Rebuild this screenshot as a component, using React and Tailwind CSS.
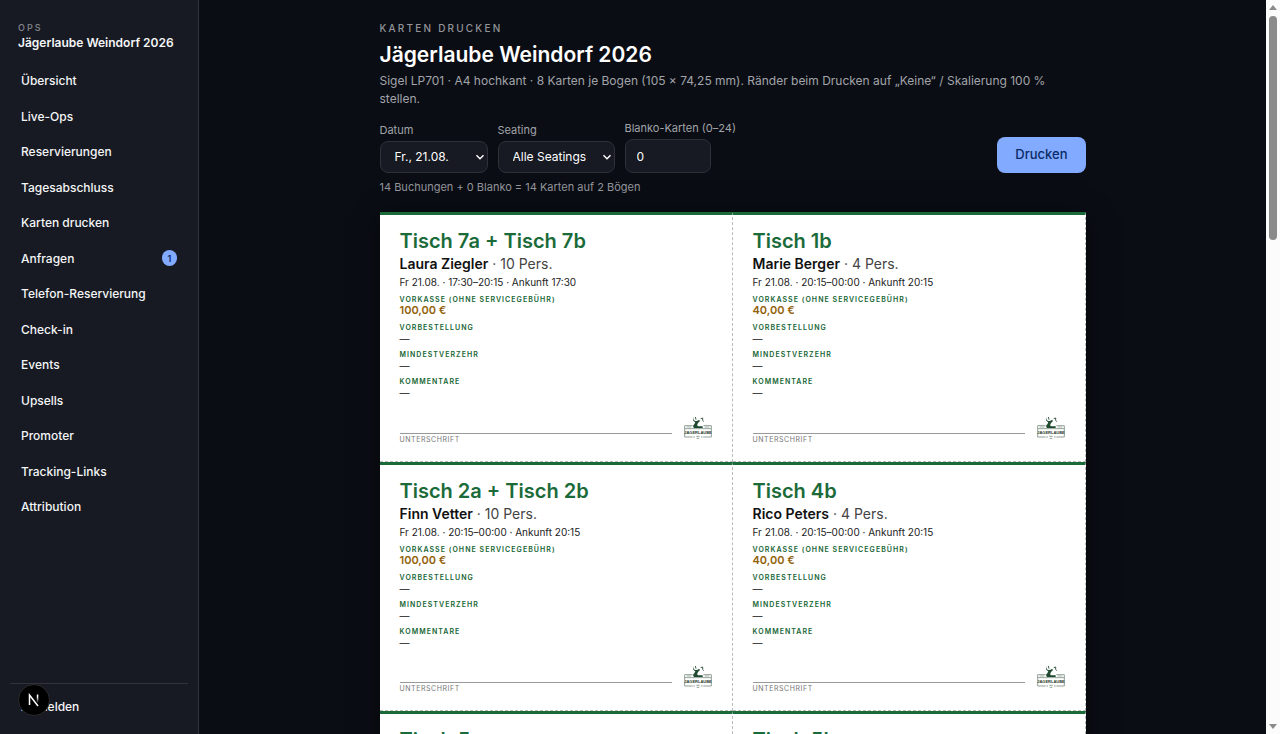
import React, { useState } from 'react';

const NAV_ITEMS = [
  { label: 'Übersicht' },
  { label: 'Live-Ops' },
  { label: 'Reservierungen' },
  { label: 'Tagesabschluss' },
  { label: 'Karten drucken' },
  { label: 'Anfragen', badge: 1 },
  { label: 'Telefon-Reservierung' },
  { label: 'Check-in' },
  { label: 'Events' },
  { label: 'Upsells' },
  { label: 'Promoter' },
  { label: 'Tracking-Links' },
  { label: 'Attribution' },
];

const BOOKINGS = [
  { table: 'Tisch 7a + Tisch 7b', name: 'Laura Ziegler', guests: 10, slot: '17:30–20:15', arrival: '17:30', prepaid: '100,00 €' },
  { table: 'Tisch 1b', name: 'Marie Berger', guests: 4, slot: '20:15–00:00', arrival: '20:15', prepaid: '40,00 €' },
  { table: 'Tisch 2a + Tisch 2b', name: 'Finn Vetter', guests: 10, slot: '20:15–00:00', arrival: '20:15', prepaid: '100,00 €' },
  { table: 'Tisch 4b', name: 'Rico Peters', guests: 4, slot: '20:15–00:00', arrival: '20:15', prepaid: '40,00 €' },
  { table: 'Tisch 5a', name: 'Jonas Keller', guests: 4, slot: '20:15–00:00', arrival: '20:15', prepaid: '40,00 €' },
  { table: 'Tisch 5b', name: 'Lena Vogt', guests: 4, slot: '20:15–00:00', arrival: '20:15', prepaid: '40,00 €' },
];

const Logo = () => (
  <svg viewBox="0 0 84 72" className="mb-[6px] w-7 h-6 shrink-0" fill="none" aria-hidden="true">
    <g stroke="#7d8f84" strokeWidth="2.5">
      <path d="M26 29H2v34h24M58 29h24v34H58" />
      <path d="M2 38h80" />
      <path d="M8 33h14M62 33h14" strokeWidth="2" />
    </g>
    <path d="M28 3c-1 7 1 10 6 12 5 0 8-1 11-4l3 4-6 6c-3 5-3 8 0 10h14v5H30c-4-4-3-8 1-11l3-6c-6-2-9-8-6-16Z" fill="#1f4a30" />
    <path d="M34 3l2 8M50 8l6-2v7l3 4" stroke="#3f5c4a" strokeWidth="3" />
    <text x="42" y="55" textAnchor="middle" fontFamily="Liberation Sans Narrow, Liberation Sans, sans-serif" fontWeight="700" fontSize="12" fill="#1f3b2a">
      JÄGERLAUBE
    </text>
    <path d="M28 63h5M51 63h5M37 61h10M38 67h8" stroke="#7d8f84" strokeWidth="2.5" />
  </svg>
);

const CardField = ({ label, value, className }) => (
  <div className="mb-[5px]">
    <div className="text-[7px] leading-[10px] font-semibold uppercase tracking-[0.15em] text-[#166534]">{label}</div>
    <div className={className || 'text-[10px] leading-3 text-[#111]'}>{value}</div>
  </div>
);

const BookingCard = ({ booking }) => (
  <article className="flex flex-col aspect-[140/99] overflow-hidden border-t-[3px] border-t-[#1b6b3a] border-r border-b border-dashed border-[#bbb] [border-top-style:solid] bg-white px-5 pt-[13px] pb-[15px] text-[#111]">
    <h2 className="mb-px text-[20px] leading-[26px] font-semibold text-[#1b6b3a]">{booking.table}</h2>
    <p className="text-[14px] leading-[18px] text-[#444]">
      <strong className="font-semibold text-[#111]">{booking.name}</strong> · {booking.guests} Pers.
    </p>
    <p className="mb-1 text-[10px] leading-[18px] text-[#222]">
      Fr 21.08. · {booking.slot} · Ankunft {booking.arrival}
    </p>
    <CardField
      label="Vorkasse (ohne Servicegebühr)"
      value={booking.prepaid}
      className="pb-[3px] text-[11px] leading-[10px] font-semibold text-[#92610a]"
    />
    <CardField label="Vorbestellung" value="—" />
    <CardField label="Mindestverzehr" value="—" />
    <CardField label="Kommentare" value="—" />
    <div className="mt-auto flex items-end gap-3">
      <div className="flex-1 border-t border-[#999] text-[7px] leading-3 uppercase tracking-[0.08em] text-[#777]">
        Unterschrift
      </div>
      <Logo />
    </div>
  </article>
);

const Chevron = () => (
  <svg viewBox="0 0 10 10" className="pointer-events-none absolute right-[3px] top-[11px] w-[10px] h-[10px]" fill="none" aria-hidden="true">
    <path d="M1.5 3.2L5 6.8l3.5-3.6" stroke="#fff" strokeWidth="1.4" />
  </svg>
);

const Sidebar = () => (
  <aside className="flex w-[199px] shrink-0 flex-col border-r border-[#30333a] bg-[#171a22] px-[10px] pt-[22px] pb-[10px]">
    <div className="px-2 pb-3">
      <div className="text-[9px] leading-3 font-medium tracking-[0.22em] text-[#85888f]">OPS</div>
      <div className="whitespace-nowrap text-[12px] leading-[17px] font-semibold">Jägerlaube Weindorf 2026</div>
    </div>
    <nav className="flex flex-col">
      {NAV_ITEMS.map((item) => (
        <a
          key={item.label}
          href="#"
          className="flex items-center justify-between rounded-lg px-[11px] py-2 text-[12px] leading-relaxed font-medium hover:bg-white/5"
        >
          {item.label}
          {item.badge && (
            <span className="flex h-4 min-w-[15px] items-center justify-center rounded-full bg-[#82aaff] text-[9px] leading-none font-semibold text-[#0a2a66]">
              {item.badge}
            </span>
          )}
        </a>
      ))}
    </nav>
    <div className="mt-auto border-t border-[#30333a] pt-[5px]">
      <button type="button" className="w-full rounded-lg px-[11px] py-2 text-left text-[12px] leading-relaxed font-medium">
        Abmelden
      </button>
    </div>
  </aside>
);

const DevBadge = () => (
  <div className="fixed bottom-[18px] left-[18px] z-10 flex h-8 w-8 items-center justify-center rounded-full border border-[#2b2b2b] bg-black">
    <svg viewBox="0 0 14 14" className="w-[14px] h-[14px]" fill="none" aria-hidden="true">
      <defs>
        <linearGradient id="fade" x1="0" y1="0" x2="0" y2="1">
          <stop offset="0.3" stopColor="#fff" />
          <stop offset="1" stopColor="#fff" stopOpacity="0" />
        </linearGradient>
      </defs>
      <path d="M2.5 12V2l8.5 11" stroke="#fff" strokeWidth="1.5" />
      <rect x="9.8" y="1.5" width="1.5" height="8.5" fill="url(#fade)" />
    </svg>
  </div>
);

const ScrollTrack = () => (
  <div className="flex w-[14px] shrink-0 flex-col items-center bg-[#fcfcfc] pt-[5px] pb-[5px]" aria-hidden="true">
    <svg viewBox="0 0 8 5" className="w-2 h-[5px]"><path d="M4 0l4 5H0Z" fill="#8b8b8b" /></svg>
    <div className="mt-[6px] h-[31%] w-2 rounded-full bg-[#8b8b8b]" />
    <svg viewBox="0 0 8 5" className="mt-auto w-2 h-[5px]"><path d="M4 5L0 0h8Z" fill="#8b8b8b" /></svg>
  </div>
);

export default function App() {
  const [date, setDate] = useState('2026-08-21');
  const [seating, setSeating] = useState('all');
  const [blanks, setBlanks] = useState(0);
  const total = 14 + Number(blanks);

  return (
    <div className="flex h-screen overflow-hidden bg-[#0a0d14] font-['Inter',sans-serif] text-[#f4f5f7]">
      <Sidebar />

      <main className="flex-1 overflow-y-auto [scrollbar-width:none]">
        <div className="mx-auto max-w-[706px] pt-[21px]">
          <header>
            <div className="text-[10px] leading-[14px] font-medium uppercase tracking-[0.22em] text-[#92949a]">Karten drucken</div>
            <h1 className="mt-[5px] text-[21px] leading-[29px] font-semibold text-white">Jägerlaube Weindorf 2026</h1>
            <p className="mt-[3px] pr-2 text-[12px] leading-[18px] text-[#a2a4a9]">
              Sigel LP701 · A4 hochkant · 8 Karten je Bogen (105 × 74,25 mm). Ränder beim Drucken auf „Keine“ / Skalierung 100 % stellen.
            </p>
          </header>

          {/* Filters */}
          <div className="mt-3 flex flex-wrap items-end gap-[10px]">
            <label className="flex flex-col gap-[3px] text-[11px] leading-4 text-[#a2a4a9]">
              Datum
              <span className="relative">
                <select
                  value={date}
                  onChange={(e) => setDate(e.target.value)}
                  className="h-8 w-[108px] appearance-none rounded-lg border border-[#2e3138] bg-[#171a22] px-[14px] text-[12px] text-white"
                >
                  <option value="2026-08-21">Fr., 21.08.</option>
                </select>
                <Chevron />
              </span>
            </label>
            <label className="flex flex-col gap-[3px] text-[11px] leading-4 text-[#a2a4a9]">
              Seating
              <span className="relative">
                <select
                  value={seating}
                  onChange={(e) => setSeating(e.target.value)}
                  className="h-8 w-[117px] appearance-none rounded-lg border border-[#2e3138] bg-[#171a22] px-[14px] text-[12px] text-white"
                >
                  <option value="all">Alle Seatings</option>
                </select>
                <Chevron />
              </span>
            </label>
            <label className="flex flex-col gap-[3px] text-[11px] leading-4 text-[#a2a4a9]">
              Blanko-Karten (0–24)
              <input
                type="text"
                inputMode="numeric"
                value={blanks}
                onChange={(e) => setBlanks(e.target.value)}
                className="h-[34px] w-[86px] rounded-lg border border-[#2e3138] bg-[#171a22] px-[11px] text-[12px] text-white"
              />
            </label>
            <button
              type="button"
              onClick={() => window.print()}
              className="ml-auto h-9 rounded-lg bg-[#82aaff] px-[18px] text-[13px] font-medium text-[#0a2a66]"
            >
              Drucken
            </button>
          </div>
          <p className="mt-[6px] text-[11px] leading-4 text-[#92949a]">
            14 Buchungen + {blanks} Blanko = {total} Karten auf {Math.ceil(total / 8)} Bögen
          </p>

          {/* Sheet preview */}
          <section className="mt-[17px] grid grid-cols-2 bg-white shadow-[0_4px_24px_rgba(0,0,0,0.5)]">
            {BOOKINGS.map((booking) => (
              <BookingCard key={booking.table} booking={booking} />
            ))}
          </section>
        </div>
      </main>

      <ScrollTrack />
      <DevBadge />
    </div>
  );
}
